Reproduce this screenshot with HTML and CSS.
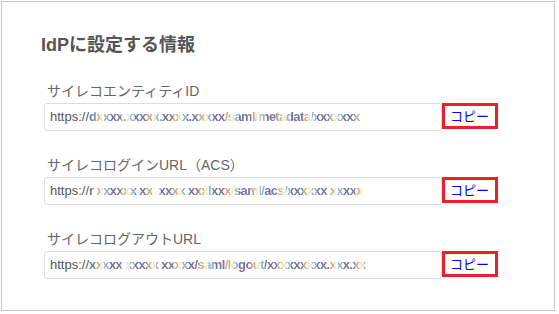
FILE: index.html
```html
<!DOCTYPE html>
<html>
	<head>
		<meta charset="utf-8">
		<title>IdPに設定する情報</title>
		<link rel="stylesheet" href="styles.css">
	</head>
	<body>
		<div class="panel">
			<h2 class="title">IdPに設定する情報</h2>

			<div class="field">
				<div class="label">サイレコエンティティID</div>
				<div class="row">
					<div class="value">https://<span class="masked">dxxxx.xxxxx.xxxx.xxxxx/saml/metadata/xxxxxxx</span></div>
					<button class="copy">コピー</button>
				</div>
			</div>

			<div class="field">
				<div class="label">サイレコログインURL（ACS）</div>
				<div class="row">
					<div class="value">https://<span class="masked">r xxxxxx xx  xxxx xxxlxxx/saml/acs/xxxxxx xxxxx</span></div>
					<button class="copy">コピー</button>
				</div>
			</div>

			<div class="field">
				<div class="label">サイレコログアウトURL</div>
				<div class="row">
					<div class="value">https://<span class="masked">xxxxx xxxxx xxxxx/saml/logout/xxxxxxxxx.xxx.xx</span></div>
					<button class="copy">コピー</button>
				</div>
			</div>
		</div>
	</body>
</html>
```

FILE: styles.css
```css
* {
	margin: 0;
	padding: 0;
	box-sizing: border-box;
}

body {
	background: #ffffff;
	font-family: "Liberation Sans", "Noto Sans CJK JP", sans-serif;
}

.panel {
	width: 554px;
	height: 310px;
	margin: 1px;
	border: 1px solid #c6c6c6;
	padding: 31px 0 0 38px;
}

.title {
	font-size: 18px;
	line-height: 24px;
	font-weight: bold;
	color: #555555;
	margin-bottom: 24px;
	padding-left: 1px;
}

.field {
	margin-bottom: 24px;
	padding-left: 4px;
}

.field .label {
	font-size: 14px;
	line-height: 20px;
	color: #666666;
	padding-left: 3px;
	margin-bottom: 2px;
}

.row {
	display: flex;
	align-items: flex-start;
}

.row .value {
	width: 398px;
	height: 28px;
	border: 1px solid #dddddd;
	border-radius: 3px;
	padding-left: 5px;
	font-size: 13px;
	line-height: 26px;
	color: #555555;
	white-space: pre;
	overflow: hidden;
}

/* URLはぼかして表示 */
.row .value .masked {
	background: repeating-linear-gradient(90deg, #6f7ba6 0 6px, #d9a878 6px 11px, #f3e7b8 11px 15px, #8fb3d6 15px 20px, #7b6f8c 20px 26px);
	-webkit-background-clip: text;
	background-clip: text;
	color: transparent;
	font-weight: bold;
	filter: blur(0.6px);
	letter-spacing: -0.6px;
}

.row .copy {
	width: 56px;
	height: 26px;
	border: 3px solid #e8212b;
	background: #ffffff;
	color: #0000ee;
	font-family: "Noto Sans CJK JP", sans-serif;
	font-size: 13px;
	line-height: 18px;
	text-align: left;
	padding-left: 5px;
	cursor: pointer;
}
```
